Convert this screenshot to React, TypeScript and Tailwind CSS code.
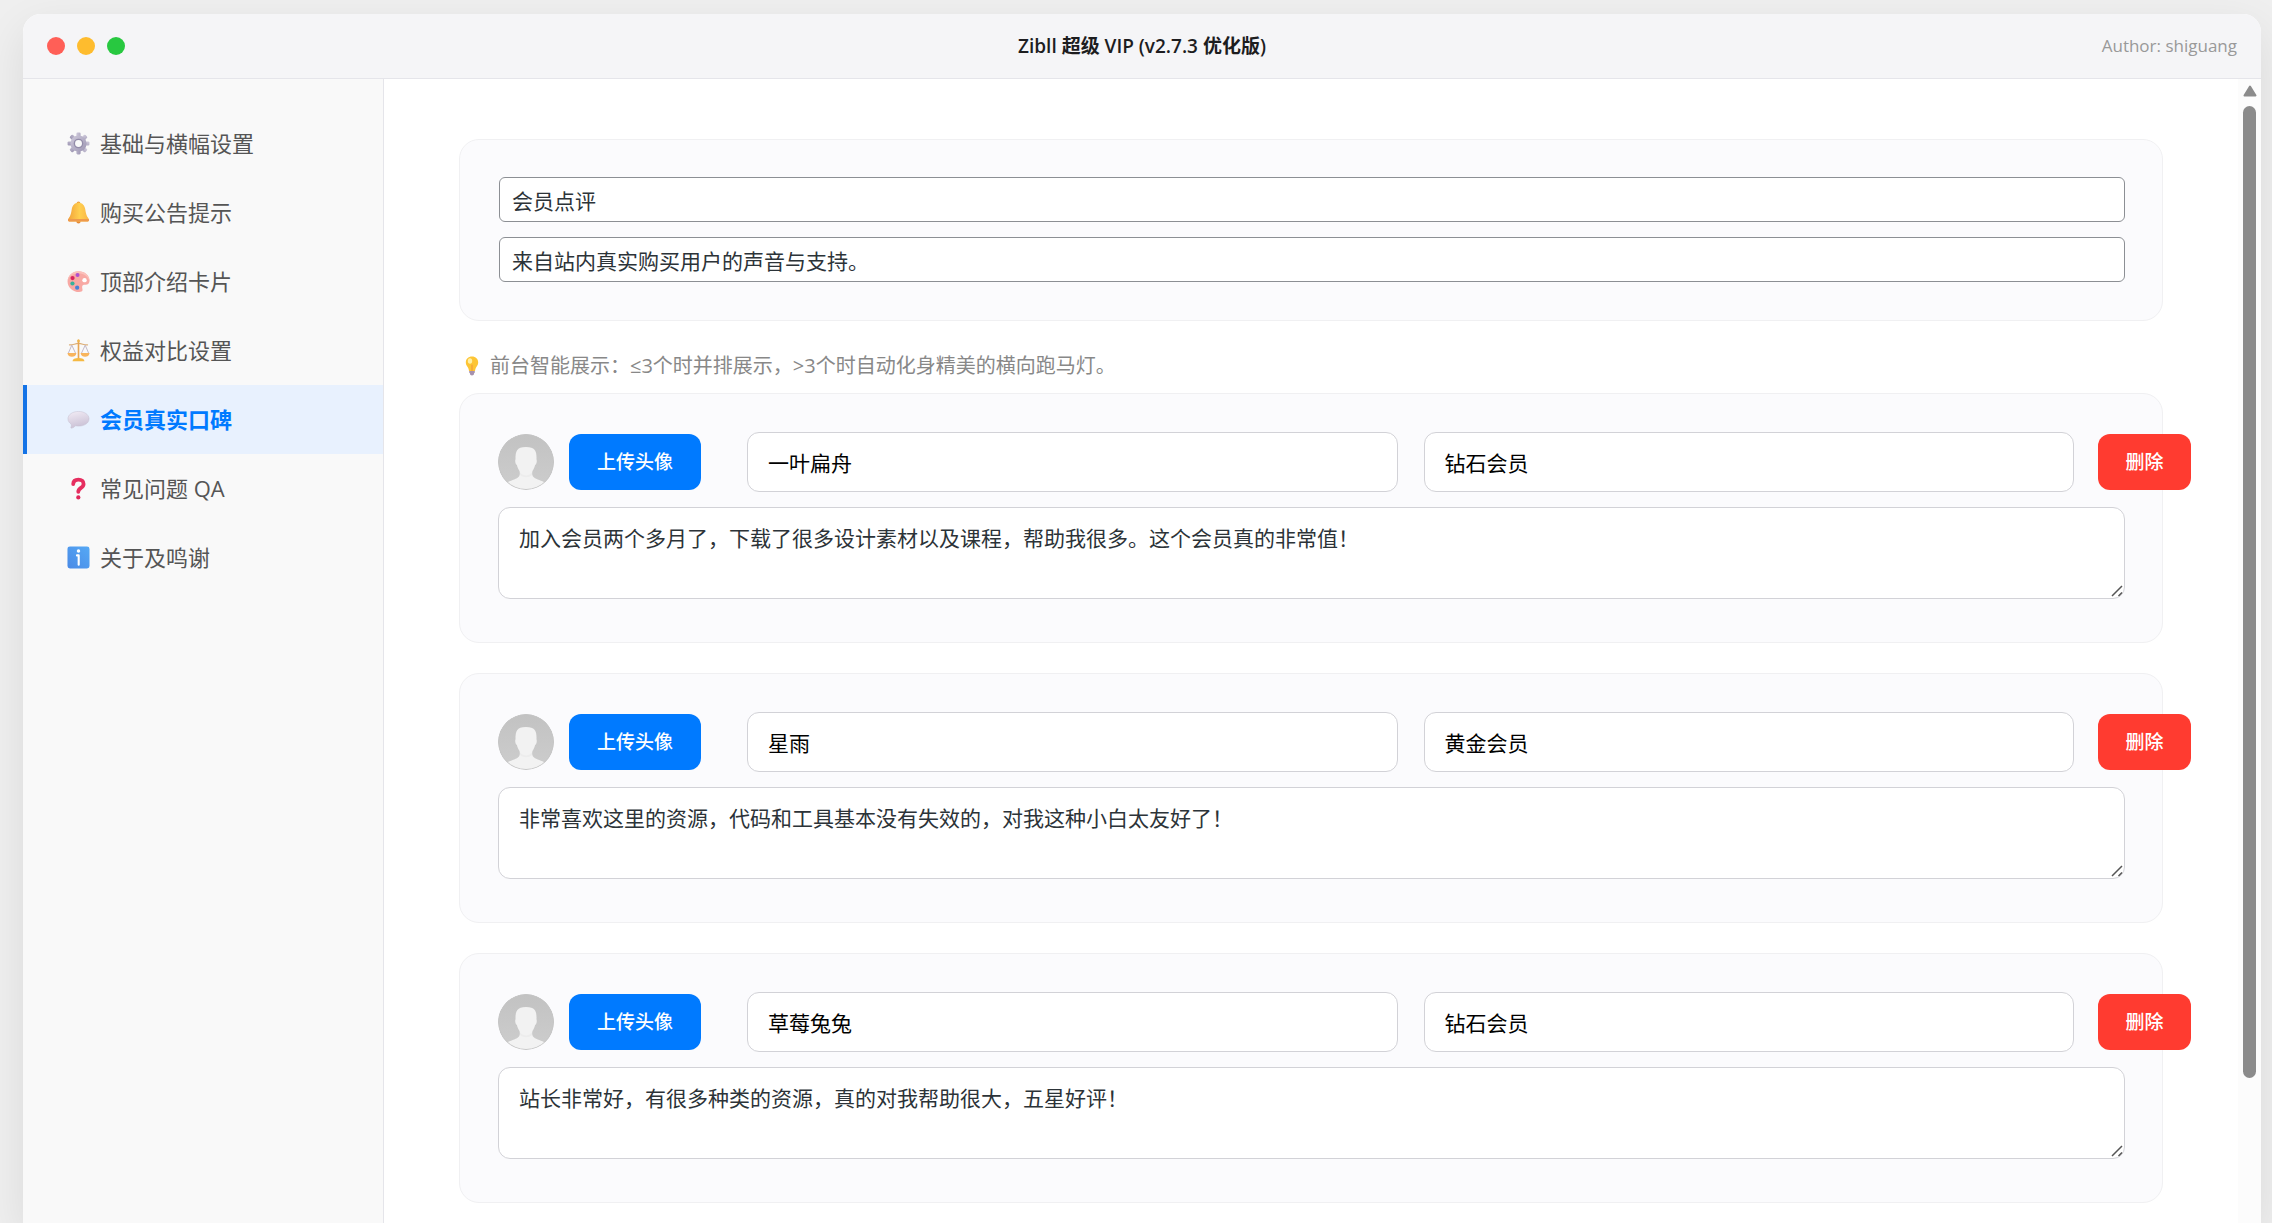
import { ReactNode, useState } from "react";
import clsx from "clsx";

function GearIcon() {
  return (
    <svg viewBox="0 0 24 24" className="size-[23px] shrink-0" aria-hidden="true">
      <defs>
        <linearGradient id="gear" x1="0" y1="0" x2="1" y2="1">
          <stop offset="0" stopColor="#cfcadb" />
          <stop offset="1" stopColor="#9d96b3" />
        </linearGradient>
      </defs>
      <g fill="url(#gear)">
        {[0, 45, 90, 135].map((deg) => (
          <rect key={deg} x="9.8" y="0.6" width="4.4" height="22.8" rx="1.2" transform={`rotate(${deg} 12 12)`} />
        ))}
        <circle cx="12" cy="12" r="8.4" />
      </g>
      <circle cx="12" cy="12" r="5" fill="#938ca9" />
      <circle cx="12" cy="12" r="3.6" fill="#f9f9f9" />
    </svg>
  );
}

function BellIcon() {
  return (
    <svg viewBox="0 0 24 24" className="size-[23px] shrink-0" aria-hidden="true">
      <defs>
        <linearGradient id="bell" x1="0" y1="0" x2="1" y2="0">
          <stop offset="0" stopColor="#f2a23a" />
          <stop offset="0.55" stopColor="#ffcf4f" />
          <stop offset="1" stopColor="#f9b548" />
        </linearGradient>
      </defs>
      <circle cx="12" cy="2.4" r="2" fill="#f0a340" />
      <circle cx="12" cy="21.4" r="2.2" fill="#e58a35" />
      <path d="M12 1.8c4.3 0 6.4 3.1 7 6.6.7 4 1 6.800 3.300 9.600.5.600.7 1.300.7 2.100 0 .8-.5 1.200-1.300 1.200H2.300c-.8 0-1.300-.4-1.300-1.200 0-.8.2-1.500.7-2.100C4 15.200 4.300 12.400 5 8.400 5.600 4.900 7.700 1.800 12 1.800z" fill="url(#bell)" />
      <path d="M1.300 18.700h21.400c.2.400.3.900.3 1.400 0 .8-.5 1.200-1.300 1.200H2.300c-.8 0-1.300-.4-1.300-1.200 0-.5.1-1 .3-1.400z" fill="#ee9a4d" />
    </svg>
  );
}

function PaletteIcon() {
  return (
    <svg viewBox="0 0 24 24" className="size-[23px] shrink-0" aria-hidden="true">
      <path d="M12 1.200c6.300 0 11.500 4.300 11.500 9.800 0 3-1.700 4.600-4.300 4.500-1.900-.1-3.400.4-3.400 2.200 0 1.700.6 2.200.4 3.500-.2 1.200-1.500 1.800-3.500 1.800C6.200 23 .6 18.300.6 12.200.6 5.800 5.700 1.200 12 1.200z" fill="#f8a9a4" />
      <path d="M12 1.200c6.300 0 11.500 4.300 11.500 9.800 0 .5 0 1-.1 1.400C22.600 7 18 3.300 12 3.300 6 3.300 1.400 7 .7 12 .7 5.700 5.800 1.200 12 1.200z" fill="#fbc1bb" />
      <circle cx="18.300" cy="10.600" r="2.300" fill="#fff" />
      <circle cx="11" cy="5.200" r="2.100" fill="#b04fd0" />
      <circle cx="5.800" cy="8.400" r="2.200" fill="#d9245f" />
      <circle cx="5.700" cy="14.100" r="2.200" fill="#35b29b" />
      <circle cx="10.600" cy="18.400" r="2.200" fill="#4681d8" />
    </svg>
  );
}

function ScalesIcon() {
  return (
    <svg viewBox="0 0 24 24" className="size-[23px] shrink-0" aria-hidden="true">
      <path d="M2.600 6.200C6 6.600 8.500 4.600 12 4.600s6 2 9.400 1.600" fill="none" stroke="#dcae77" strokeWidth="1.300" strokeLinecap="round" />
      <path d="M12 1.500v18.500" stroke="#e8a552" strokeWidth="1.700" strokeLinecap="round" />
      <circle cx="12" cy="2" r="1.400" fill="#f0b64c" />
      <path d="M5 6.500L1.300 15M5 6.500L9 15M19 6.500L15 15M19 6.500L22.700 15" fill="none" stroke="#b9adc0" strokeWidth="0.900" />
      <path d="M.5 14.600h9.300c-.4 2.800-2.200 4-4.650 4S.9 17.400.5 14.600z" fill="#f8b45c" />
      <path d="M14.200 14.600h9.300c-.4 2.800-2.200 4-4.650 4s-4.250-1.200-4.650-4z" fill="#f8b45c" />
      <path d="M5.800 23.200c0-2 2.400-3.300 6.200-3.300s6.200 1.300 6.200 3.300z" fill="#f5b942" />
    </svg>
  );
}

function SpeechIcon() {
  return (
    <svg viewBox="0 0 24 24" className="size-[23px] shrink-0" aria-hidden="true">
      <defs>
        <linearGradient id="speech" x1="0" y1="0" x2="0.300" y2="1">
          <stop offset="0" stopColor="#f3edf6" />
          <stop offset="1" stopColor="#cbc2d6" />
        </linearGradient>
      </defs>
      <path d="M12 3.600c6.200 0 11 3.200 11 7.700 0 4.400-4.800 7.600-11 7.600-1.200 0-2.300-.1-3.300-.3-1.200 1.500-2.600 2.300-4.100 2.400-.6 0-.8-.4-.5-.9.500-.9.600-2 .3-3.200C2.200 15.500 1 13.500 1 11.300c0-4.500 4.800-7.700 11-7.700z" fill="url(#speech)" stroke="#c5bdcf" strokeWidth="0.500" />
    </svg>
  );
}

function QuestionIcon() {
  return (
    <svg viewBox="0 0 24 24" className="size-[23px] shrink-0" aria-hidden="true">
      <path d="M6.500 7.300C6.600 4 8.900 2.700 12 2.700c3.200 0 5.300 1.700 5.300 4.500 0 4.400-5.500 3.800-5.500 8.300" fill="none" stroke="#e62e5f" strokeWidth="4" strokeLinecap="round" />
      <circle cx="11.800" cy="21.300" r="2.200" fill="#e0265a" />
    </svg>
  );
}

function InfoIcon() {
  return (
    <svg viewBox="0 0 24 24" className="size-[23px] shrink-0" aria-hidden="true">
      <defs>
        <linearGradient id="info" x1="1" y1="0" x2="0" y2="1">
          <stop offset="0" stopColor="#55a9f5" />
          <stop offset="1" stopColor="#4a8ae6" />
        </linearGradient>
      </defs>
      <rect x="0.500" y="0.500" width="23" height="23" rx="2.600" fill="url(#info)" />
      <circle cx="12" cy="5.300" r="1.800" fill="#fff" />
      <path d="M10.400 9.800h1.800v9.800" fill="none" stroke="#fff" strokeWidth="2.200" strokeLinecap="round" strokeLinejoin="round" />
    </svg>
  );
}

function BulbIcon() {
  return (
    <svg viewBox="0 0 20 20" className="size-5 shrink-0" aria-hidden="true">
      <path d="M7.200 14h5.600v2.200c0 .5-.3.900-.8 1v.6c0 1-.8 1.700-2 1.700s-2-.7-2-1.700v-.6c-.5-.1-.8-.5-.8-1z" fill="#a792ad" />
      <path d="M10 .6c3.700 0 6.200 2.500 6.200 5.900 0 2.600-1.500 3.900-2.400 5.500-.5.900-.4 1.700-.7 2.400-.2.400-.5.600-1 .6H7.900c-.5 0-.8-.2-1-.6-.3-.7-.2-1.500-.7-2.400-.9-1.600-2.400-2.900-2.400-5.500C3.800 3.100 6.300.6 10 .6z" fill="#fdc535" />
      <ellipse cx="8" cy="5" rx="2.200" ry="2.800" fill="#fff0a6" />
      <path d="M10 9v5.500" stroke="#f59a3a" strokeWidth="1.200" strokeLinecap="round" />
    </svg>
  );
}

// Avatar padrão para membros sem foto enviada
function Avatar() {
  return (
    <svg viewBox="0 0 56 56" className="size-14 shrink-0 rounded-full" role="img" aria-label="头像">
      <defs>
        <clipPath id="avatar-clip">
          <circle cx="28" cy="28" r="28" />
        </clipPath>
        <linearGradient id="avatar-bg" x1="0" y1="0" x2="0" y2="1">
          <stop offset="0" stopColor="#c2c2c2" />
          <stop offset="1" stopColor="#cdcdcd" />
        </linearGradient>
      </defs>
      <g clipPath="url(#avatar-clip)">
        <rect width="56" height="56" fill="url(#avatar-bg)" />
        <path d="M5 56c.5-4 2-6.500 5-8 4-2 9-3 11-5.500 1-1.500 1-3.500.5-5.500-1.300-1.800-2.200-4-2.600-6-1.500-.3-2.100-4.200-1.400-5.700C17.500 17.500 18.500 13 28 13s10.800 4.500 10.500 12.300c.7 1.500.1 5.400-1.400 5.700-.4 2-1.300 4.200-2.600 6-.5 2-.5 4 .5 5.500 2 2.500 7 3.500 11 5.500 3 1.500 4.500 4 5 8z" fill="#f2f2f2" />
        <path d="M22 38.500c3.500 4 8.500 4 12 0v2.500c-3.500 3-8.500 3-12 0z" fill="#ececec" />
      </g>
      <circle cx="28" cy="28" r="27.500" fill="none" stroke="#c6c6c6" />
    </svg>
  );
}

interface NavItem {
  id: string;
  label: string;
  icon: ReactNode;
}

const navItems: NavItem[] = [
  { id: "base", label: "基础与横幅设置", icon: <GearIcon /> },
  { id: "notice", label: "购买公告提示", icon: <BellIcon /> },
  { id: "cards", label: "顶部介绍卡片", icon: <PaletteIcon /> },
  { id: "compare", label: "权益对比设置", icon: <ScalesIcon /> },
  { id: "reviews", label: "会员真实口碑", icon: <SpeechIcon /> },
  { id: "faq", label: "常见问题 QA", icon: <QuestionIcon /> },
  { id: "about", label: "关于及鸣谢", icon: <InfoIcon /> },
];

interface Review {
  name: string;
  level: string;
  text: string;
}

const initialReviews: Review[] = [
  {
    name: "一叶扁舟",
    level: "钻石会员",
    text: "加入会员两个多月了，下载了很多设计素材以及课程，帮助我很多。这个会员真的非常值！",
  },
  {
    name: "星雨",
    level: "黄金会员",
    text: "非常喜欢这里的资源，代码和工具基本没有失效的，对我这种小白太友好了！",
  },
  {
    name: "草莓兔兔",
    level: "钻石会员",
    text: "站长非常好，有很多种类的资源，真的对我帮助很大，五星好评！",
  },
];

const cardClass = "rounded-[20px] border border-[#f0f0f2] bg-[#fbfbfd] pr-[37px] pl-[38px]";
const plainInput =
  "ml-px h-[45px] rounded-md border border-[#8c8f94] bg-white px-3 text-[21px] text-[#2c3338] outline-none";
const fieldInput =
  "h-[60px] min-w-0 flex-1 rounded-xl border border-[#d2d2d7] bg-white px-5 text-[21px] text-black outline-none";

function ReviewCard({ review, onDelete }: { review: Review; onDelete: () => void }) {
  return (
    <section className={clsx(cardClass, "pt-[38px] pb-[43px]")}>
      {/* A linha é mais larga que o cartão: o botão de apagar sai pela direita */}
      <div className="-mr-[66px] flex items-center">
        <Avatar />
        <button
          type="button"
          className="ml-[15px] h-14 w-[132px] shrink-0 rounded-xl bg-[#007aff] text-[19px] font-medium text-white"
        >
          上传头像
        </button>
        <div className="ml-[46px] flex min-w-0 flex-1 gap-[26px]">
          <input aria-label="昵称" className={fieldInput} defaultValue={review.name} />
          <input aria-label="会员等级" className={fieldInput} defaultValue={review.level} />
        </div>
        <button
          type="button"
          onClick={onDelete}
          className="ml-6 h-14 w-[93px] shrink-0 rounded-xl bg-[#ff3b30] text-[19px] font-medium text-white"
        >
          删除
        </button>
      </div>
      <div className="relative mt-[15px]">
        <textarea
          aria-label="评价内容"
          className="block h-[92px] w-full resize-none rounded-xl border border-[#d2d2d7] bg-white px-5 py-[14px] text-[21px] leading-8 text-[#2c3338] outline-none"
          defaultValue={review.text}
        />
        <svg viewBox="0 0 12 12" className="absolute right-[2px] bottom-[2px] size-3" aria-hidden="true">
          <path d="M1 11L11 1M7.500 11L11 7.500" stroke="#555" strokeWidth="1.500" />
        </svg>
      </div>
    </section>
  );
}

export default function App() {
  const [active, setActive] = useState("reviews");
  const [reviews, setReviews] = useState(initialReviews);

  return (
    <div className="flex min-h-screen bg-[#efefef] pt-[14px] pr-[11px] pl-[23px] font-['Open_Sans','Noto_Sans_CJK_SC',sans-serif]">
      <div className="flex flex-1 flex-col overflow-hidden rounded-t-[18px] bg-white shadow-[0_15px_45px_rgba(0,0,0,0.09)]">
        <header className="grid h-[65px] shrink-0 grid-cols-[1fr_auto_1fr] items-center border-b border-[#e5e5ea] bg-[#f5f5f7] px-6">
          <div className="flex gap-3">
            <span className="size-[18px] rounded-full bg-[#ff5f57]" />
            <span className="size-[18px] rounded-full bg-[#febc2e]" />
            <span className="size-[18px] rounded-full bg-[#28c840]" />
          </div>
          <h1 className="text-[19px] font-semibold text-[#1d1d1f]">Zibll 超级 VIP (v2.7.3 优化版)</h1>
          <span className="text-right text-[17px] text-[#999]">Author: shiguang</span>
        </header>

        <div className="flex flex-1">
          <nav className="w-[361px] shrink-0 border-r border-[#e5e5ea] bg-[#f9f9f9] pt-[30px]">
            {navItems.map((item) => (
              <button
                key={item.id}
                type="button"
                onClick={() => setActive(item.id)}
                className={clsx(
                  "flex h-[69px] w-full items-center gap-[10px] border-l-4 pl-10 text-[22px]",
                  item.id === active
                    ? "border-[#1473e6] bg-[#e8f1fe] font-semibold text-[#007aff]"
                    : "border-transparent font-normal text-[#555]",
                )}
              >
                {item.icon}
                {item.label}
              </button>
            ))}
          </nav>

          <main className="min-w-0 flex-1 px-[75px] pt-[60px] pb-5">
            <section className={clsx(cardClass, "flex flex-col gap-[15px] pt-[37px] pb-[38px]")}>
              <input aria-label="标题" className={plainInput} defaultValue="会员点评" />
              <input aria-label="副标题" className={plainInput} defaultValue="来自站内真实购买用户的声音与支持。" />
            </section>

            <p className="mt-[30px] mb-3 flex h-[30px] items-center gap-2 pl-[3px] text-[20px] text-[#888]">
              <BulbIcon />
              前台智能展示：≤3个时并排展示，&gt;3个时自动化身精美的横向跑马灯。
            </p>

            <div className="flex flex-col gap-[30px]">
              {reviews.map((review) => (
                <ReviewCard
                  key={review.name}
                  review={review}
                  onDelete={() => setReviews(reviews.filter((r) => r !== review))}
                />
              ))}
            </div>
          </main>

          <div className="flex w-[23px] shrink-0 flex-col items-center bg-[#fcfcfc] pt-[6px]" aria-hidden="true">
            <svg viewBox="0 0 14 12" className="h-3 w-[14px] shrink-0">
              <path d="M7 1.500L12.500 10.500H1.500z" fill="#8b8b8b" stroke="#8b8b8b" strokeWidth="2" strokeLinejoin="round" />
            </svg>
            <span className="mt-[9px] w-[13px] flex-[87] rounded-full bg-[#8b8b8b]" />
            <span className="flex-[13]" />
          </div>
        </div>
      </div>
    </div>
  );
}
